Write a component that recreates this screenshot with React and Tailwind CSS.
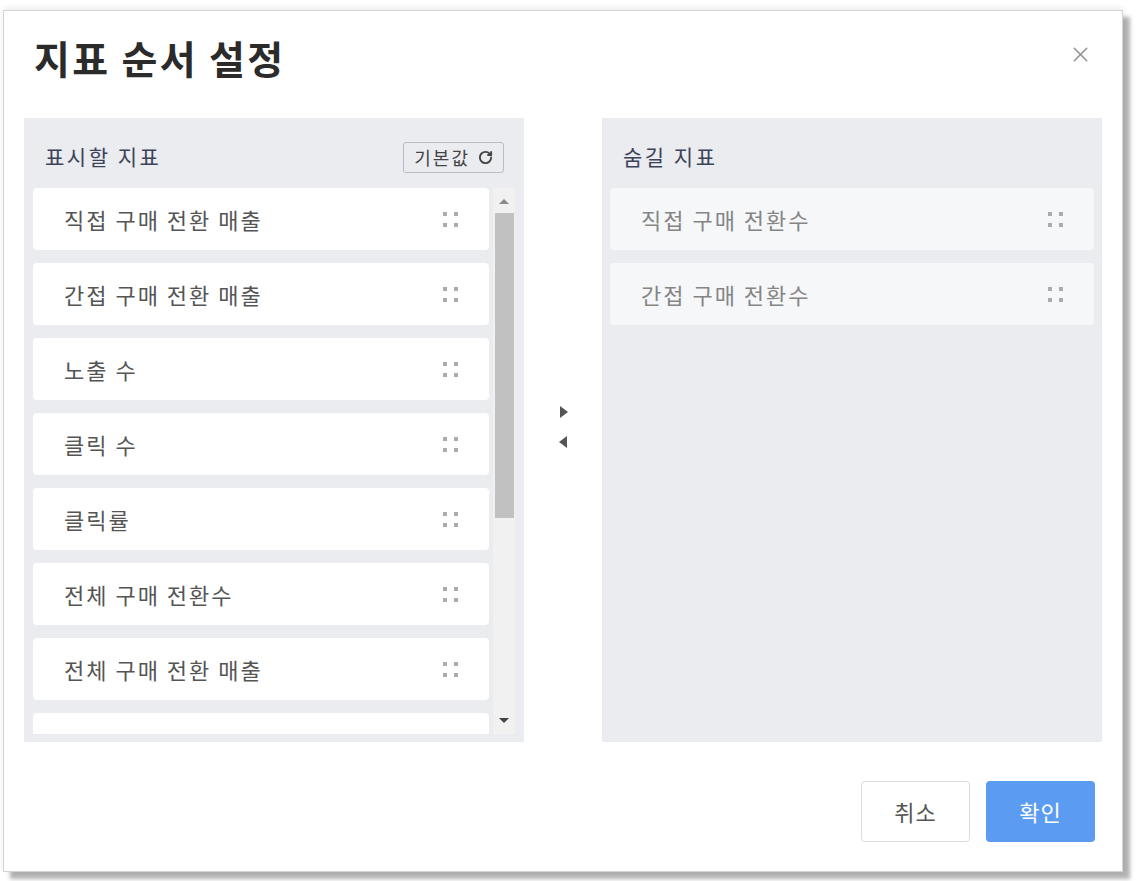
import { X, RotateCw } from "lucide-react";

const SHOWN = [
  "직접 구매 전환 매출",
  "간접 구매 전환 매출",
  "노출 수",
  "클릭 수",
  "클릭률",
  "전체 구매 전환수",
  "전체 구매 전환 매출",
  "",
];

const HIDDEN = ["직접 구매 전환수", "간접 구매 전환수"];

const FONT = { fontFamily: '"Noto Sans CJK KR", "Noto Sans", sans-serif' };

function Handle() {
  return (
    <div className="grid grid-cols-2 gap-[7px]">
      <span className="w-1 h-1 bg-[#a9abb0]" />
      <span className="w-1 h-1 bg-[#a9abb0]" />
      <span className="w-1 h-1 bg-[#a9abb0]" />
      <span className="w-1 h-1 bg-[#a9abb0]" />
    </div>
  );
}

function Item({ label, muted }) {
  return (
    <div
      className={
        "shrink-0 h-[62px] rounded flex items-center justify-between pl-[31px] pr-[31px] text-[22px] " +
        (muted ? "bg-[#f6f7f9] text-[#858585]" : "bg-white text-[#555]")
      }
    >
      <span className="tracking-[2px]">{label}</span>
      <Handle />
    </div>
  );
}

export default function App() {
  return (
    <div className="w-[1138px] h-[881px] bg-white pt-[10px] pl-[3px]" style={FONT}>
      <div className="w-[1120px] h-[862px] bg-white border border-[#d4d4d4] shadow-[0_-2px_6px_rgba(0,0,0,0.08),7px_7px_4px_rgba(0,0,0,0.3)] flex flex-col">
        {/* title */}
        <div className="h-[107px] flex items-start justify-between pl-[30px] pr-[29px]">
          <h1 className="mt-[17px] text-[39px] font-bold text-[#2b2b2b] tracking-[2.3px]">
            지표 순서 설정
          </h1>
          <X className="mt-[31px] w-[25px] h-[25px] text-[#8f8f8f]" strokeWidth={1.4} />
        </div>

        {/* panels */}
        <div className="flex pl-[20px] h-[624px]">
          <section className="w-[500px] h-full bg-[#eaecf0] flex flex-col">
            <div className="h-[70px] flex items-center justify-between pl-[21px] pr-[20px] pt-[8px]">
              <span className="text-[21px] text-[#3c4259] tracking-[2.5px]">표시할 지표</span>
              <button className="h-[31px] px-[10px] flex items-center gap-[8px] border border-[#b9bcc2] rounded-[3px] text-[18px] text-[#444] tracking-[2px]">
                기본값
                <RotateCw className="w-[15px] h-[15px]" strokeWidth={3} />
              </button>
            </div>
            <div className="flex pl-[9px] pr-[9px] h-[546px]">
              <div className="w-[456px] h-full overflow-hidden flex flex-col gap-[13px]">
                {SHOWN.map((s, i) => (
                  <Item key={i} label={s} />
                ))}
              </div>
              {/* scrollbar */}
              <div className="ml-[4px] w-[22px] h-full bg-[#f1f1f2] flex flex-col items-center pt-[11px] pb-[11px]">
                <span className="w-0 h-0 border-l-[5px] border-r-[5px] border-b-[5px] border-l-transparent border-r-transparent border-b-[#8a8a8a]" />
                <div className="mt-[9px] w-[19px] h-[305px] bg-[#c1c1c1]" />
                <div className="flex-1" />
                <span className="w-0 h-0 border-l-[5px] border-r-[5px] border-t-[5px] border-l-transparent border-r-transparent border-t-[#444]" />
              </div>
            </div>
          </section>

          {/* move arrows */}
          <div className="w-[78px] flex flex-col items-center justify-center gap-[18px] pb-[6px]">
            <span className="ml-[2px] w-0 h-0 border-t-[6px] border-b-[6px] border-l-[8px] border-t-transparent border-b-transparent border-l-[#555]" />
            <span className="w-0 h-0 border-t-[6px] border-b-[6px] border-r-[8px] border-t-transparent border-b-transparent border-r-[#555]" />
          </div>

          <section className="w-[500px] h-full bg-[#eaecf0] flex flex-col">
            <div className="h-[70px] flex items-center pl-[21px] pt-[8px]">
              <span className="text-[21px] text-[#3c4259] tracking-[2.5px]">숨길 지표</span>
            </div>
            <div className="px-[8px] flex flex-col gap-[13px]">
              {HIDDEN.map((s) => (
                <Item key={s} label={s} muted />
              ))}
            </div>
          </section>
        </div>

        {/* footer */}
        <div className="flex justify-end gap-[16px] pr-[27px] pt-[39px]">
          <button className="w-[109px] h-[61px] rounded-[4px] border border-[#dcdcdc] bg-white text-[22px] text-[#555] tracking-[1px]">
            취소
          </button>
          <button className="w-[109px] h-[61px] rounded-[4px] bg-[#5b9cf2] text-[22px] text-white tracking-[1px]">
            확인
          </button>
        </div>
      </div>
    </div>
  );
}
